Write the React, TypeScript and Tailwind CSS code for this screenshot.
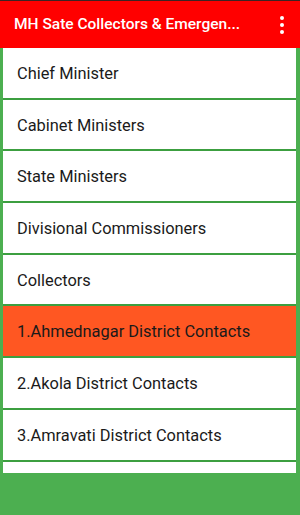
export default function App() {
  const items = [
    "Chief Minister",
    "Cabinet Ministers",
    "State Ministers",
    "Divisional Commissioners",
    "Collectors",
    "1.Ahmednagar District Contacts",
    "2.Akola District Contacts",
    "3.Amravati District Contacts",
    "",
  ];

  return (
    <div className="w-[300px] h-[515px] flex flex-col bg-[#4caf50] overflow-hidden font-['Roboto',sans-serif]">
      {/* status bar sliver */}
      <div className="h-[1px] bg-[#3b2424]" />

      {/* TOOLBAR */}
      <div className="h-[47px] bg-[#ff0000] flex items-center pl-[14px] pr-[6px] shrink-0">
        <div className="flex-1 text-white text-[15.5px] font-medium whitespace-nowrap">
          MH Sate Collectors &amp; Emergen...
        </div>
        <div className="w-[24px] flex flex-col items-center gap-[3px]">
          <span className="w-[4px] h-[4px] rounded-full bg-white" />
          <span className="w-[4px] h-[4px] rounded-full bg-white" />
          <span className="w-[4px] h-[4px] rounded-full bg-white" />
        </div>
      </div>

      {/* LISTA */}
      <div className="h-[425px] pl-[3px] pr-[4px] overflow-hidden shrink-0">
        {items.map((item, i) => (
          <div
            key={i}
            className={
              i === 5
                ? "h-[51.7px] border-b-2 border-[#3c9f40] bg-[#ff5722] flex items-center pl-[14px] pt-[3px] text-[16.4px] text-[#1a1a1a]"
                : "h-[51.7px] border-b-2 border-[#3c9f40] bg-white flex items-center pl-[14px] pt-[3px] text-[16.4px] text-[#1a1a1a]"
            }
          >
            {item}
          </div>
        ))}
      </div>
    </div>
  );
}
